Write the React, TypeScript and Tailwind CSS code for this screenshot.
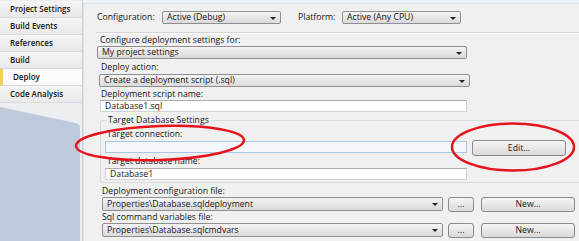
import React from 'react';

const tabs = ['Project Settings', 'Build Events', 'References', 'Build', 'Deploy', 'Code Analysis'];

function Dropdown({ text, className }: { text: string; className: string }) {
  return (
    <div
      className={`relative flex items-center rounded-[2px] border border-[#8e8f8f] bg-gradient-to-b from-[#f4f4f4] to-[#dadada] pl-[4px] leading-none ${className}`}
    >
      <span>{text}</span>
      <span className="absolute right-[4px] top-1/2 -translate-y-[1px] h-0 w-0 border-x-[3px] border-t-[3px] border-x-transparent border-t-[#222]" />
    </div>
  );
}

function TextBox({ text, className }: { text?: string; className: string }) {
  return (
    <div className={`flex items-center border border-[#cfd4da] border-t-[#abadb3] bg-white pl-[4px] leading-none ${className}`}>
      {text}
    </div>
  );
}

function Button({ text, className }: { text: string; className: string }) {
  return (
    <div
      className={`flex items-center justify-center rounded-[3px] border border-[#8a8a8a] bg-gradient-to-b from-[#f5f5f5] to-[#d9d9d9] leading-none ${className}`}
    >
      {text}
    </div>
  );
}

export default function App() {
  return (
    <div className="relative flex h-[241px] w-[579px] overflow-hidden bg-[#eef1f5] font-['Open_Sans',sans-serif] text-[8.7px] font-medium text-[#161616]">
      {/* Side tabs */}
      <div className="flex w-[83px] shrink-0 flex-col border-r border-[#c9cfd6] bg-[#eceef1] pt-[1px]">
        {tabs.map((t) => (
          <div
            key={t}
            className={`flex h-[17px] items-center border-b border-[#d6dbe1] pl-[10px] text-[8px] font-semibold ${
              t === 'Deploy'
                ? 'border-l-[3px] border-l-[#f2cf5b] bg-[#fbfbfb] pl-[7px]'
                : 'bg-gradient-to-b from-[#f5f5f5] to-[#e9e9e9]'
            }`}
          >
            {t}
          </div>
        ))}
        <svg width="82" height="138" viewBox="0 0 82 138" className="block">
          <path d="M0 4 L76 20 Q80 21 80 25 L80 138 L0 138 Z" fill="#bdcadb" />
        </svg>
      </div>

      {/* Main panel */}
      <div className="mt-[3px] flex-1 border-l border-t border-[#dde2e8] bg-[#f0f0f0]">
        <div className="mt-[7px] flex h-[13px] items-center pl-[13px]">
          <span className="w-[65px]">Configuration:</span>
          <Dropdown text="Active (Debug)" className="h-[13px] w-[119px]" />
          <span className="ml-[17px] w-[44px]">Platform:</span>
          <Dropdown text="Active (Any CPU)" className="h-[13px] w-[119px]" />
        </div>

        <div className="ml-[12px] mt-[8px] h-[2px] border-t border-[#d5d5d5] border-b border-b-white" />

        <div className="ml-[16px] h-[12px] leading-[12px]">Configure deployment settings for:</div>
        <Dropdown text="My project settings" className="ml-[13px] h-[13px] w-[370px]" />

        <div className="ml-[17px] mt-[2px] h-[12px] leading-[12px]">Deploy action:</div>
        <Dropdown text="Create a deployment script (.sql)" className="ml-[15px] mt-[1px] h-[13px] w-[371px]" />

        <div className="ml-[17px] mt-[1px] h-[12px] leading-[12px]">Deployment script name:</div>
        <TextBox text="Database1.sql" className="ml-[16px] h-[12px] w-[367px]" />

        {/* Group box */}
        <div className="ml-[16px] mt-[8px] w-[490px] rounded-[3px] border border-[#d5dde3] pb-[2px] pl-[4px]">
          <div className="-mt-[7px] ml-[2px] h-[12px] w-fit bg-[#f0f0f0] px-[1px] leading-[12px]">Target Database Settings</div>
          <div className="ml-[2px] mt-[2px] h-[12px] leading-[12px]">Target connection:</div>
          <div className="flex h-[15px]">
            <div className="mt-[1px] h-[12px] w-[362px] border border-[#a9c6e3] bg-[#f3f6fa]" />
            <Button text="Edit..." className="ml-[5px] h-[16px] w-[94px] border-[#4f8bc0] from-[#eef3f8] to-[#d3dbe4]" />
          </div>
          <div className="ml-[2px] h-[12px] leading-[12px]">Target database name:</div>
          <TextBox text="Database1" className="mt-[1px] h-[12px] w-[362px]" />
        </div>

        <div className="ml-[18px] mt-[2px] h-[12px] leading-[12px]">Deployment configuration file:</div>
        <div className="ml-[18px] flex h-[14px]">
          <Dropdown text="Properties\Database.sqldeployment" className="h-[14px] w-[341px]" />
          <Button text="..." className="ml-[5px] h-[15px] w-[26px]" />
          <Button text="New..." className="ml-[7px] h-[15px] w-[94px]" />
        </div>

        <div className="ml-[18px] h-[12px] leading-[12px]">Sql command variables file:</div>
        <div className="ml-[18px] flex h-[14px]">
          <Dropdown text="Properties\Database.sqlcmdvars" className="h-[14px] w-[341px]" />
          <Button text="..." className="ml-[5px] h-[15px] w-[26px]" />
          <Button text="New..." className="ml-[7px] h-[15px] w-[94px]" />
        </div>
      </div>

      {/* Red highlight ellipses */}
      <svg className="pointer-events-none absolute left-0 top-0" width="579" height="241">
        <ellipse cx="160" cy="143" rx="84" ry="17" fill="none" stroke="#e5131b" strokeWidth="2.5" transform="rotate(-2 160 143)" />
        <ellipse cx="513" cy="147" rx="61" ry="23.5" fill="none" stroke="#e5131b" strokeWidth="2.5" />
      </svg>
    </div>
  );
}
